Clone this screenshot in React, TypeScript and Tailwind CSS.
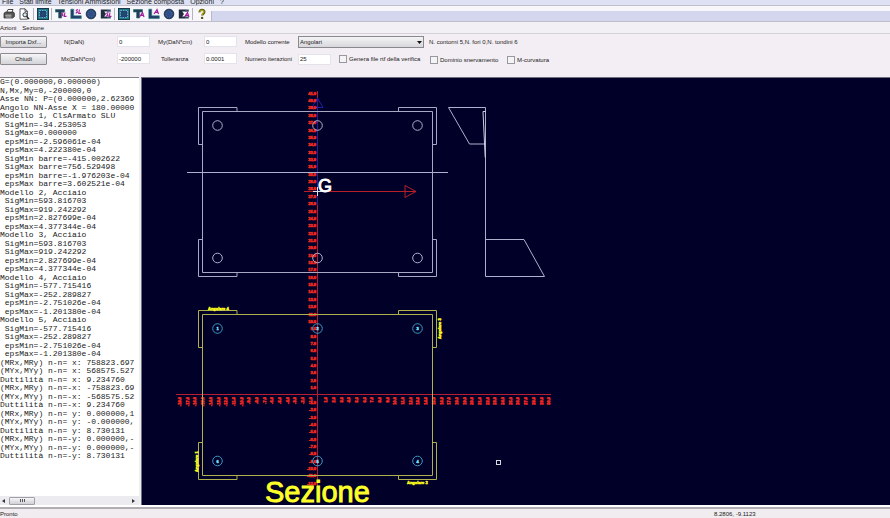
import type { ReactNode } from "react";

const MENU = ["File", "Stati limite", "Tensioni Ammissioni", "Sezione composta", "Opzioni", "?"];

const LOG = [
  "G=(0.000000,0.000000)",
  "N,Mx,My=0,-200000,0",
  "Asse NN: P=(0.000000,2.62369",
  "Angolo NN-Asse X = 180.00000",
  "Modello 1, ClsArmato SLU",
  " SigMin=-34.253053",
  " SigMax=0.000000",
  " epsMin=-2.596061e-04",
  " epsMax=4.222380e-04",
  " SigMin barre=-415.002622",
  " SigMax barre=756.529498",
  " epsMin barre=-1.976203e-04",
  " epsMax barre=3.602521e-04",
  "Modello 2, Acciaio",
  " SigMin=593.816703",
  " SigMax=919.242292",
  " epsMin=2.827699e-04",
  " epsMax=4.377344e-04",
  "Modello 3, Acciaio",
  " SigMin=593.816703",
  " SigMax=919.242292",
  " epsMin=2.827699e-04",
  " epsMax=4.377344e-04",
  "Modello 4, Acciaio",
  " SigMin=-577.715416",
  " SigMax=-252.289827",
  " epsMin=-2.751026e-04",
  " epsMax=-1.201380e-04",
  "Modello 5, Acciaio",
  " SigMin=-577.715416",
  " SigMax=-252.289827",
  " epsMin=-2.751026e-04",
  " epsMax=-1.201380e-04",
  "(MRx,MRy) n-n= x: 758823.697",
  "(MYx,MYy) n-n= x: 568575.527",
  "Duttilità n-n= x: 9.234760",
  "(MRx,MRy) n-n=-x: -758823.69",
  "(MYx,MYy) n-n=-x: -568575.52",
  "Duttilità n-n=-x: 9.234760",
  "(MRx,MRy) n-n= y: 0.000000,1",
  "(MYx,MYy) n-n= y: -0.000000,",
  "Duttilità n-n= y: 8.730131",
  "(MRx,MRy) n-n=-y: 0.000000,-",
  "(MYx,MYy) n-n=-y: 0.000000,-",
  "Duttilità n-n=-y: 8.730131",
];

function ToolButton({ label, children }: { label: string; children: ReactNode }) {
  return (
    <button type="button" aria-label={label} className="flex h-3 w-[15px] items-center justify-center">
      <svg viewBox="0 0 12 12" className="size-3">
        {children}
      </svg>
    </button>
  );
}

function Separator() {
  return <span className="mx-px h-3 w-px bg-[#b4b4be]" />;
}

function SectionIcon() {
  return (
    <>
      <rect x="0.5" y="0.5" width="11" height="11" fill="#20788c" stroke="#183848" />
      <rect x="2.5" y="2.5" width="7" height="7" fill="#283c78" stroke="#5cb4bc" strokeDasharray="1.5 1" />
      <circle cx="6" cy="6" r="2" fill="#204c6c" />
    </>
  );
}

function IconTag({ kind }: { kind: "SL" | "A" }) {
  return kind === "SL" ? (
    <path d="M8.5 4.5 6.8 5.2 8 7 6.2 8.2M10 4.5 9.2 8.4h2.3" fill="none" stroke="#a01c98" strokeWidth="1.1" />
  ) : (
    <path d="M6.5 9 9.5 4.5 11 9M7.8 7.4h2.6" fill="none" stroke="#a01c98" strokeWidth="1.2" />
  );
}

function ShapeButtons({ kind, name }: { kind: "SL" | "A"; name: string }) {
  return (
    <>
      <ToolButton label={`Sezione ${name}`}>
        <SectionIcon />
      </ToolButton>
      {kind === "SL" ? <Separator /> : null}
      <ToolButton label={`Sezione a T ${name}`}>
        <path d="M0.5 1.5h9v2.6H6.6V10H3.6V4.1H.5z" fill="#243c58" stroke="#207070" strokeWidth="0.6" />
        <IconTag kind={kind} />
      </ToolButton>
      <ToolButton label={`Sezione a L ${name}`}>
        <path d="M.8 1.2h2.9v6.6h7.6v2.8H.8z" fill="#243c68" stroke="#207c80" strokeWidth="0.6" />
        <g transform="translate(-.5 -3)">
          <IconTag kind={kind} />
        </g>
      </ToolButton>
      <ToolButton label={`Sezione circolare ${name}`}>
        <circle cx="6" cy="6" r="4.8" fill="#28406c" stroke="#1c3454" />
        <circle cx="6" cy="6" r="3.2" fill="#344c88" stroke="#3c7c98" strokeDasharray="1 1" />
      </ToolButton>
      <ToolButton label={`Sezione generica ${name}`}>
        <path d="M.8 1.4h6.6v2H4.2L6 6 4.2 8.4h3v2.2H.8z" fill="#202c40" />
        <path d="M7 1.4h3.8v2.4H7zM7 8.6h3.8v2H7z" fill="#385068" />
        <IconTag kind={kind} />
      </ToolButton>
    </>
  );
}

function Toolbar() {
  return (
    <div className="flex h-4 items-center border-b border-[#c0c0cc] bg-[#f6f6fb]">
      <div className="flex items-center px-px">
        <ToolButton label="Stampa">
          <path d="M3.5 5 5 1.5h5L8.8 5" fill="#fff" stroke="#333" strokeWidth="0.9" />
          <path d="M1 5.2 2.8 4h7.6l1 1.2v3.4L9.6 10H1z" fill="#555" stroke="#222" strokeWidth="0.7" />
          <path d="M2.2 7.2h6.2M2.6 9h5.8" stroke="#ddd" strokeWidth="0.8" />
        </ToolButton>
        <ToolButton label="Anteprima di stampa">
          <path d="M2 .8h5l2.4 2.4v8H2zM7 .8v2.6h2.4" fill="#fff" stroke="#333" strokeWidth="0.8" />
          <circle cx="7" cy="6.8" r="2.1" fill="#d4ecf0" stroke="#222" strokeWidth="0.9" />
          <path d="m8.5 8.4 2.6 2.6" stroke="#222" strokeWidth="1.3" />
        </ToolButton>
      </div>
      <Separator />
      <ShapeButtons kind="SL" name="stati limite" />
      <Separator />
      <ShapeButtons kind="A" name="tensioni ammissibili" />
      <Separator />
      <ToolButton label="Guida">
        <path d="M3.6 4.4C3.4 1 8.6 1 8.4 4 8.2 5.6 6.2 5.6 6.2 7.6" fill="none" stroke="#5c5c10" strokeWidth="2.2" />
        <path d="M3.9 4.2C3.8 1.6 8 1.6 7.9 4 7.8 5.2 6 5.6 6 7.2" fill="none" stroke="#d8d020" strokeWidth="0.9" />
        <circle cx="6.1" cy="9.9" r="1.2" fill="#555510" />
      </ToolButton>
      <div className="mt-[4px] ml-[2px] h-[10px] flex-1 border-l border-[#b8b8c8] bg-[#d4d6ee]" />
    </div>
  );
}

const input =
  "h-[11px] w-[33px] border border-[#e4e2ea] bg-white px-px text-[6px] leading-[8px] text-[#222] outline-none";
const button =
  "h-[12px] w-[47px] rounded-[1px] border border-[#8c8c90] bg-linear-to-b from-[#f6f6f8] to-[#d4d4d8] text-[6px] leading-[8px]";

function Check({ id, label }: { id: string; label: string }) {
  return (
    <div className="flex items-center gap-[2px]">
      <input
        id={id}
        type="checkbox"
        className="size-[8px] shrink-0 appearance-none border border-[#98989e] bg-[#f4f4f6] checked:bg-[#555]"
      />
      <label htmlFor={id}>{label}</label>
    </div>
  );
}

function Parameters() {
  return (
    <form className="flex h-[43px] items-start gap-x-2 bg-[#f2eef3] pt-[2px] whitespace-nowrap">
      <div className="grid w-[47px] gap-[5px]">
        <button type="button" className={button}>Importa Dxf...</button>
        <button type="button" className={button}>Chiudi</button>
      </div>
      <div className="ml-[4px] grid grid-cols-[50px_33px] items-center gap-x-[8px] gap-y-[6px]">
        <label htmlFor="n" className="pl-[5px]">N(DaN)</label>
        <input id="n" className={input} defaultValue="0" />
        <label htmlFor="mx" className="pl-[2px]">Mx(DaN*cm)</label>
        <input id="mx" className={input} defaultValue="-200000" />
      </div>
      <div className="grid grid-cols-[38px_33px] items-center gap-x-[8px] gap-y-[6px]">
        <label htmlFor="my">My(DaN*cm)</label>
        <input id="my" className={input} defaultValue="0" />
        <label htmlFor="tol" className="pl-[3px]">Tolleranza</label>
        <input id="tol" className={input} defaultValue="0.0001" />
      </div>
      <div className="grid gap-y-[5px]">
        <div className="flex h-[12px] items-center">
          <label htmlFor="model" className="w-[53px]">Modello corrente</label>
          <div className="grid w-[126px] items-center">
            <select
              id="model"
              className="col-start-1 row-start-1 h-[12px] w-full appearance-none border border-[#88888e] bg-linear-to-b from-[#f4f4f5] to-[#d8d8dc] px-px text-[6px] leading-[8px]"
            >
              <option>Angolari</option>
            </select>
            <svg viewBox="0 0 5 3" className="pointer-events-none col-start-1 row-start-1 mr-[2px] h-[3px] w-[5px] justify-self-end">
              <path d="M0 0h5L2.5 3z" fill="#111" />
            </svg>
          </div>
          <span className="ml-[5px]">N. contorni 5,N. fori 0,N. tondini 6</span>
        </div>
        <div className="flex h-[12px] items-center">
          <label htmlFor="iter" className="w-[53px]">Numero iterazioni</label>
          <input id="iter" className={input} defaultValue="25" />
          <div className="ml-2 flex items-center gap-[10px]">
            <div className="w-[81px]">
              <Check id="rtf" label="Genera file rtf della verifica" />
            </div>
            <div className="flex gap-[10px] pt-[2px]">
              <div className="w-[67px]">
                <Check id="dominio" label="Dominio snervamento" />
              </div>
              <Check id="curv" label="M-curvatura" />
            </div>
          </div>
        </div>
      </div>
    </form>
  );
}

function Results() {
  return (
    <section aria-label="Risultati" className="flex w-[139px] shrink-0 flex-col overflow-hidden border-t border-[#808084] bg-white">
      <ul className="grid h-[383px] auto-rows-fr font-['Liberation_Mono',monospace] text-[8px] leading-[8px] whitespace-pre text-[#222]">
        {LOG.map((line, i) => (
          <li key={i}>{line}</li>
        ))}
      </ul>
      <div className="mt-auto flex h-[9px] items-center bg-[#ececf0] px-[2px]">
        <svg viewBox="0 0 3 4" className="h-1 w-[3px]"><path d="M3 0v4L0 2z" fill="#333" /></svg>
        <div className="ml-1 flex h-2 w-[26px] items-center justify-center gap-px rounded-[1px] border border-[#a0a0a6] bg-linear-to-b from-[#f6f6f8] to-[#d0d0d6]">
          <span className="h-[3px] w-px bg-[#555]" />
          <span className="h-[3px] w-px bg-[#555]" />
          <span className="h-[3px] w-px bg-[#555]" />
        </div>
        <svg viewBox="0 0 3 4" className="mr-[2px] ml-auto h-1 w-[3px]"><path d="M0 0v4l3-2z" fill="#333" /></svg>
      </div>
    </section>
  );
}

const OX = 317.5;
const OY = 394.5;
const SX = 7.69;
const SY = 7.36;
const range = (a: number, b: number) =>
  Array.from({ length: b - a + 1 }, (_, i) => a + i).filter((n) => n !== 0);

function Outline({ top, color }: { top: number; color: string }) {
  return (
    <g fill="none" stroke={color} transform={`translate(0 ${top})`}>
      <path d="M202.5 4.5h230v161h-230z" />
      <path d="M202.5 37.5h-4V.5h38.5v4M398.5 4.500v-4h38v37h-4M202.5 132.5h-4v37h38.5v-4M398.5 165.5v4h38v-37h-4" />
    </g>
  );
}

const BARS = [
  [217.5, 328.5],
  [317.5, 328.5],
  [417.5, 328.5],
  [417.5, 461],
  [317.5, 461],
  [217.5, 461],
];

function Drawing() {
  return (
    <svg className="block h-full w-full font-['Liberation_Sans',Arial,sans-serif]" role="img" aria-label="Sezione">
      <g transform="translate(-142 -78)">
        <g stroke="#b81c34">
          <path d={`M176 ${OY}H551`} />
          <path d={`M${OX} 91V486`} />
        </g>
        <path d="M317.5 98V205M317.5 98l-5.500 9.500h11z" fill="none" stroke="#2020a4" />
        <g fill="#f82c20" stroke="#e82820" strokeWidth="0.6" fontSize="4" fontWeight="700" textAnchor="end">
          {range(-12, 41).map((n) => (
            <text key={n} x="316" y={OY - n * SY + 2}>{n.toFixed(1)}</text>
          ))}
          {range(-18, 30).map((n) => (
            <text key={n} transform={`translate(${OX + n * SX + 2} 397) rotate(-90)`}>{n.toFixed(1)}</text>
          ))}
        </g>

        <Outline top={107} color="#a8a8c4" />
        <g fill="none" stroke="#b0b0cc">
          <path d="M187 172.5H448" />
          {[125.5, 258].map((y) =>
            [217.5, 317.5, 417.5].map((x) => <circle key={`${x}-${y}`} cx={x} cy={y} r="4.8" />),
          )}
          <path d="M485.5 107.5h-37l21 36.5h16M485.5 107.5V276.5H544.5L524 239.5H485.5" />
          <path d="M485.5 111.5h-2.5l2.2 46" stroke="#d0d0e0" />
        </g>
        <path d="M304 191.5H416l-11-6v12l11-6" fill="none" stroke="#b82028" />
        <path d="M313 191.5h9M317.5 187v9" stroke="#e0e0e8" />
        <text x="318" y="192" fontSize="18" fill="#fff" stroke="#fff" strokeWidth="0.9">G</text>

        <Outline top={310} color="#b0b04c" />
        {BARS.map(([x, y], i) => (
          <g key={i}>
            <circle cx={x} cy={y} r="4.8" fill="none" stroke="#3c98c0" />
            <text x={x} y={y + 1.5} fontSize="4" fontWeight="700" textAnchor="middle" fill="#7ce4ff" stroke="#7ce4ff" strokeWidth="0.4">
              {i + 1}
            </text>
          </g>
        ))}
        <g fill="#f8f81c" stroke="#f8f81c" strokeWidth="0.5" fontSize="4" fontWeight="700">
          <text x="208" y="310">Angolare 4</text>
          <text x="407" y="484">Angolare 2</text>
          <text transform="translate(198 472) rotate(-90)">Angolare 1</text>
          <text transform="translate(441 339) rotate(-90)">Angolare 3</text>
        </g>
        <text x="265" y="502" fontSize="29" fill="#ffff28" stroke="#ffff28" strokeWidth="0.9">Sezione</text>
        <rect x="496.5" y="460.5" width="4" height="4" fill="none" stroke="#d8d8e0" />
      </g>
    </svg>
  );
}

export default function App() {
  return (
    <div className="flex min-h-screen flex-col overflow-hidden bg-[#f0eef2] font-['Liberation_Sans',Arial,sans-serif] text-[6px] leading-[8px] text-[#222]">
      <nav className="flex h-[6px] items-end gap-[6px] overflow-hidden border-b border-[#c0c0cc] bg-[#dde1f3] pl-[2px] text-[7px] leading-[7px]">
        {MENU.map((m) => (
          <button key={m} type="button">{m}</button>
        ))}
      </nav>
      <Toolbar />
      <nav className="flex h-[12px] items-center gap-[6px] border-b border-[#d4d0d8] bg-[#f2f0f4] pt-px">
        <button type="button">Azioni</button>
        <button type="button">Sezione</button>
      </nav>
      <Parameters />
      <main className="flex flex-1 items-stretch">
        <Results />
        <div className="ml-[2px] flex flex-1 border-t border-l border-[#70707c] bg-[#000028]">
          <Drawing />
        </div>
      </main>
      <footer className="flex h-[13px] items-end border-t-2 border-white bg-[#f0ecef] leading-[7px]">
        <div className="flex h-full flex-1 items-end border-t-2 border-[#b0aeb2]">
          <span className="w-[714px]">Pronto</span>
          <span>8.2806, -9.1123</span>
        </div>
      </footer>
    </div>
  );
}
